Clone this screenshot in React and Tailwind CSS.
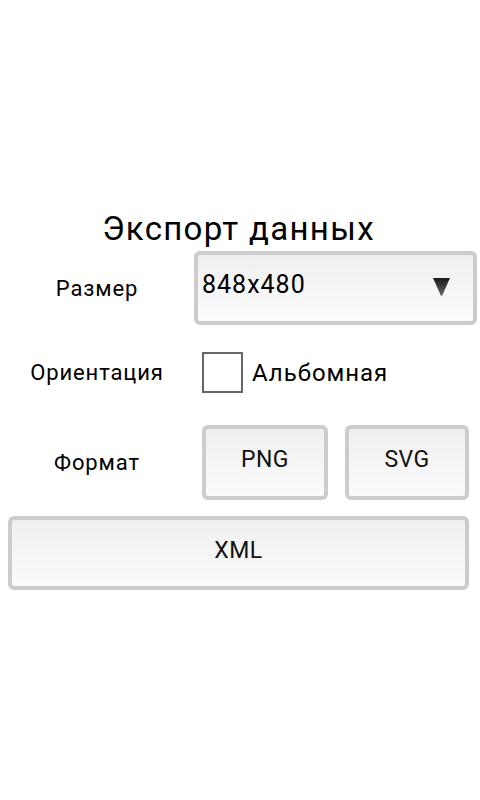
import React from "react";

function Btn({ children, className = "" }) {
  return (
    <div
      className={
        "flex items-center justify-center rounded-[6px] border-4 border-[#cccccc] bg-gradient-to-b from-[#efefef] to-[#fbfbfb] pb-[4px] text-[23px] tracking-[0.02em] text-[#111]" +
        " " +
        className
      }
    >
      {children}
    </div>
  );
}

export default function App() {
  return (
    <div
      className="w-[480px] h-[800px] bg-white text-black"
      style={{ fontFamily: "Roboto, 'Noto Sans', sans-serif" }}
    >
      <div className="pt-[209px] w-[477px]">
        <div className="h-[40px] text-center text-[33px] leading-[40px] tracking-[0.04em]">Экспорт данных</div>

        {/* Row 1 */}
        <div className="mt-[2px] flex h-[74px]">
          <div className="flex w-[194px] items-center justify-center text-[22px] tracking-[0.04em]">Размер</div>
          <div className="flex flex-1 items-start justify-between rounded-[6px] border-4 border-[#cccccc] bg-gradient-to-b from-[#efefef] to-[#fcfcfc] pl-[4px] pr-[23px] pt-[15px]">
            <div className="h-[30px] text-[25px] leading-[30px] tracking-[0.04em]">848x480</div>
            <svg width="17" height="18" viewBox="0 0 17 18" className="mt-[8px]">
              <defs>
                <linearGradient id="tri" x1="0" y1="0" x2="0" y2="1">
                  <stop offset="0" stopColor="#1a1a1a" />
                  <stop offset="1" stopColor="#666" />
                </linearGradient>
              </defs>
              <path d="M0 0 H17 L9.2 17.5 Q8.5 18 7.8 17.5 Z" fill="url(#tri)" />
            </svg>
          </div>
        </div>

        {/* Row 2 */}
        <div className="mt-[27px] flex h-[41px]">
          <div className="flex w-[194px] items-center justify-center text-[22px] tracking-[0.04em]">Ориентация</div>
          <div className="flex items-center pl-[8px]">
            <div className="h-[41px] w-[41px] border-2 border-[#666]" />
            <div className="ml-[9px] text-[24px] leading-[30px] tracking-[0.04em]">Альбомная</div>
          </div>
        </div>

        {/* Row 3 */}
        <div className="mt-[32px] flex h-[75px]">
          <div className="flex w-[194px] items-center justify-center text-[22px] tracking-[0.04em]">Формат</div>
          <div className="flex flex-1 gap-[17px] px-[8px]">
            <Btn className="w-[126px]">PNG</Btn>
            <Btn className="w-[124px]">SVG</Btn>
          </div>
        </div>

        {/* Row 4 */}
        <div className="mt-[16px] px-[8px]">
          <Btn className="h-[74px] w-full">XML</Btn>
        </div>
      </div>
    </div>
  );
}
